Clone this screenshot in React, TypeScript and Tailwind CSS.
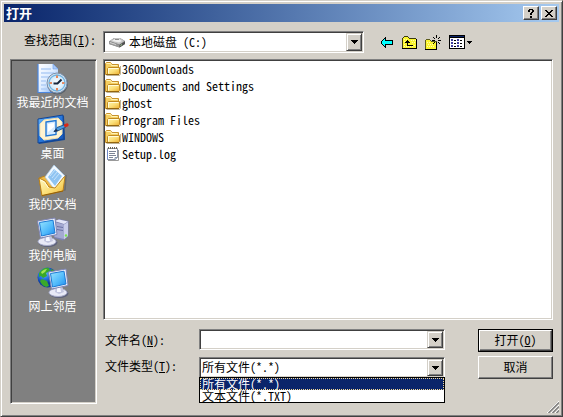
import React, { useState } from "react";

const sunken =
  "border border-t-[#808080] border-l-[#808080] border-r-white border-b-white shadow-[inset_1px_1px_0_#404040,inset_-1px_-1px_0_#d4d0c8]";
const raised =
  "border border-t-[#d4d0c8] border-l-[#d4d0c8] border-r-[#404040] border-b-[#404040] bg-[#d4d0c8] shadow-[inset_1px_1px_0_#fff,inset_-1px_-1px_0_#808080]";
const push =
  "border border-t-white border-l-white border-r-[#404040] border-b-[#404040] bg-[#d4d0c8] shadow-[inset_-1px_-1px_0_#808080]";

function DownTriangle() {
  return (
    <svg width="7" height="4" viewBox="0 0 7 4" shapeRendering="crispEdges" aria-hidden="true">
      <path d="M0 0h7v1H0zM1 1h5v1H1zM2 2h3v1H2zM3 3h1v1H3z" />
    </svg>
  );
}

function FolderIcon() {
  return (
    <svg width="16" height="16" viewBox="0 0 16 16" className="shrink-0" aria-hidden="true">
      <defs>
        <linearGradient id="folder" x1="0" y1="0" x2="1" y2="1">
          <stop offset="0" stopColor="#fff6b0" />
          <stop offset="0.5" stopColor="#fbe07a" />
          <stop offset="1" stopColor="#ecae30" />
        </linearGradient>
      </defs>
      <path d="M1.500 14.500h13l1-1.500V5" fill="none" stroke="#8a7440" opacity=".55" />
      <path d="M.5 13.500v-11l1-1h4l1.500 2h6.500v10z" fill="#f5cf62" stroke="#c8922c" />
      <path d="M1.500 2.500h4l1 2h6" fill="none" stroke="#fff4b8" />
      <path d="M2.500 13.500v-6l1-1h11v6l-1 1h-11z" fill="url(#folder)" stroke="#c08a22" />
      <path d="M3.500 12.500v-5h10" fill="none" stroke="#fffbd8" />
      <path d="M1 13.500h13" stroke="#94660f" />
    </svg>
  );
}

function NoteIcon() {
  return (
    <svg width="16" height="16" viewBox="0 0 16 16" className="shrink-0" aria-hidden="true">
      <path d="M3 14.500h10.500V4" fill="none" stroke="#9a9a9a" />
      <path d="M2.500 2.500h10v9l-2 2h-8z" fill="#fff" stroke="#8a94a8" />
      <path d="M4 5.500h7M4 7.500h6M4 9.500h7M4 11.500h4" stroke="#7b8496" />
      <path d="M2.500 4v9.500" stroke="#6f88c8" />
      <path d="M3 2.500h10" stroke="#c79a3c" strokeDasharray="1 1" />
      <path d="M3.500 1v2M5.500 1v2M7.500 1v2M9.500 1v2M11.500 1v2" stroke="#6d6450" />
      <path d="M10 13.500v-2h2.500" fill="#dfe6ef" stroke="#8192a8" />
    </svg>
  );
}

function DriveIcon() {
  return (
    <svg width="16" height="16" viewBox="0 0 16 16" className="shrink-0" aria-hidden="true">
      <path d="M0 7.500L5 4h6l5 3v3l-5.500 3.500L0 10z" fill="#7c7c7c" />
      <path d="M.5 7L5.500 4H11l4.500 3-5 3.500z" fill="#c4c4c4" />
      <path d="M3 7l3-2h4l3 2-3 1.500z" fill="#efefef" />
      <path d="M6 5.500h4" stroke="#8c8c8c" />
      <path d="M0 7.500L10.500 11v2.500L0 10z" fill="#989898" />
      <path d="M1 8.500l6 2" stroke="#d4d4d4" />
      <path d="M10.500 11L16 7.500V10l-5.500 3.500z" fill="#505050" />
      <path d="M11.500 11.500l1.500-1" stroke="#a8d898" />
    </svg>
  );
}

function RecentIcon() {
  return (
    <svg width="32" height="32" viewBox="0 0 32 32" aria-hidden="true">
      <defs>
        <linearGradient id="page" x1="0" y1="0" x2="1" y2="1">
          <stop offset="0" stopColor="#fff" />
          <stop offset=".5" stopColor="#dcebff" />
          <stop offset="1" stopColor="#6fa6f0" />
        </linearGradient>
        <radialGradient id="clock">
          <stop offset="0" stopColor="#fff" />
          <stop offset="1" stopColor="#cfe8fa" />
        </radialGradient>
      </defs>
      <path d="M1 1h15l5 5v24H1z" fill="url(#page)" />
      <path d="M1 1v28.500h20" fill="none" stroke="#4a86e0" strokeWidth="1.200" />
      <path d="M16 1v5h5z" fill="#a8c8f8" stroke="#6d9ee8" strokeWidth=".6" />
      <path d="M4 6h10M4 10h13M4 14h8M4 18h5M4 22h5M4 26h6" stroke="#b0cdf6" strokeWidth="1.500" />
      <circle cx="20.500" cy="21" r="10.500" fill="#4d5561" opacity=".7" />
      <circle cx="20" cy="20" r="10" fill="#d9e2ec" stroke="#7890ad" />
      <circle cx="20" cy="20" r="8" fill="url(#clock)" stroke="#6db4e4" strokeWidth="1.300" />
      <path d="M20 12.500v2.500M20 25v2.500M12.500 20H15M25 20h2.500" stroke="#ee6b2f" strokeWidth="1.600" />
      <path d="M16.500 20.500h4l4-4" fill="none" stroke="#16263c" strokeWidth="1.900" />
    </svg>
  );
}

function DesktopIcon() {
  return (
    <svg width="32" height="32" viewBox="0 0 32 32" aria-hidden="true">
      <defs>
        <linearGradient id="desk" x1="0" y1="0" x2="1" y2="1">
          <stop offset="0" stopColor="#6dbcff" />
          <stop offset=".4" stopColor="#2a7ee4" />
          <stop offset="1" stopColor="#1552b4" />
        </linearGradient>
      </defs>
      <path d="M2 6l25-4 1 24-26 4z" fill="#174c9a" />
      <path d="M1 5l25-4 1 24-26 4z" fill="url(#desk)" stroke="#124493" />
      <path d="M7 6l14-2 4 4v12l-4 4-14 2-4-4V10z" fill="#fff3d0" stroke="#efe0b0" />
      <path d="M9 8l10-1.500v14L9 22z" fill="#d3eaff" stroke="#2277d4" strokeWidth="1.400" />
      <path d="M11 10l6-1v4l-6 5z" fill="#fff" />
      <path d="M17 17.500l3-4L28 10.500l1 2.500-8.500 4z" fill="#4a9ae0" stroke="#204f87" strokeWidth=".9" />
      <path d="M16.500 18l3-3 1.500 2z" fill="#1a2a4c" />
      <path d="M28.500 11.500l1.500-.6" stroke="#d82818" strokeWidth="3.200" strokeLinecap="round" />
    </svg>
  );
}

function DocumentsIcon() {
  return (
    <svg width="32" height="32" viewBox="0 0 32 32" aria-hidden="true">
      <defs>
        <linearGradient id="docs" x1="0" y1="0" x2="1" y2="1">
          <stop offset="0" stopColor="#fffbc8" />
          <stop offset=".6" stopColor="#fbdc70" />
          <stop offset="1" stopColor="#eeae2c" />
        </linearGradient>
      </defs>
      <path d="M5 30L28 25l1-15" fill="none" stroke="#555" strokeWidth="1.500" opacity=".5" />
      <path d="M2 13l6-2 3 2 12-3 4 2-2 13-20 5z" fill="#efba48" stroke="#b88420" />
      <path d="M8 12L17 0l11 11-10 14z" fill="#f2f9ff" stroke="#a8cdec" strokeWidth=".7" />
      <path d="M11 12l6-8 8 7-7 10z" fill="#8fc4f2" />
      <path d="M13 11l5-6M15 13l5-6M17 15l5-6" stroke="#c6e3fb" />
      <path d="M2 13l6 3 4 6 6 1 9-11 1-.5-2 14.500L5 31z" fill="url(#docs)" stroke="#b77a12" strokeWidth=".9" />
      <path d="M3.500 15l4 2 4 6" fill="none" stroke="#fffde0" />
      <path d="M5 30.500L26 26" stroke="#92600b" />
    </svg>
  );
}

function Monitor({ x, y }: { x: number; y: number }) {
  return (
    <g transform={`translate(${x} ${y})`}>
      <ellipse cx="11" cy="25.500" rx="9.500" ry="4.500" fill="#555a78" opacity=".8" />
      <ellipse cx="10" cy="24.500" rx="9" ry="4" fill="#e8e9f6" stroke="#a7abc8" />
      <path d="M8 18h6l2 6-5 2-4-2z" fill="#c3c6e0" />
      <path d="M9 19h3l1 5H9z" fill="#f6f7ff" />
      <path d="M.5 4L18 1l2 16.500L3.500 21z" fill="#eef0fb" stroke="#7f86b4" />
      <path d="M2.500 5.500L16 3.200l2 12.800-13.500 3z" fill="url(#screen)" stroke="#1c7ad4" />
    </g>
  );
}

function ComputerIcon() {
  return (
    <svg width="32" height="32" viewBox="0 0 32 32" aria-hidden="true">
      <defs>
        <linearGradient id="screen" x1="0" y1="0" x2="1" y2="1">
          <stop offset="0" stopColor="#9be6ff" />
          <stop offset=".6" stopColor="#4db8fb" />
          <stop offset="1" stopColor="#2088ea" />
        </linearGradient>
      </defs>
      <path d="M17 5l5-2 9.500 2v15L26 24.500 17 22z" fill="#7c82b0" />
      <path d="M17.500 5l4.500-1.500L31 5.500 27 8z" fill="#e4e6f8" />
      <path d="M17.500 6L27 8.500V23l-9.500-2z" fill="#a5aad2" />
      <path d="M27 8.500l4-2.500v14l-4 3.500z" fill="#c9cdea" />
      <path d="M20 10.500l6 1M20 13.500l6 1" stroke="#6a71a4" />
      <circle cx="29" cy="19.500" r="1.200" fill="#75e844" />
      <Monitor x={0} y={1} />
    </svg>
  );
}

function NetworkIcon() {
  return (
    <svg width="32" height="32" viewBox="0 0 32 32" aria-hidden="true">
      <defs>
        <radialGradient id="globe" cx=".35" cy=".3">
          <stop offset="0" stopColor="#7cc4ff" />
          <stop offset=".5" stopColor="#2a7ce8" />
          <stop offset="1" stopColor="#0c3ca0" />
        </radialGradient>
      </defs>
      <circle cx="10.500" cy="10.500" r="10" fill="url(#globe)" />
      <path d="M2 6c3-5 7-6 10-5l1 3-4 2 1 3-4 2-2-2-2 1zM14 2c3 1 5 3 6 6l-4 3-3-3zM5 12l5 2 2 5-3 1c-3-1-5-3-6-6z" fill="#3aa82a" />
      <path d="M4 5c2-2 4-3 6-3L8 5 5 7z" fill="#a6e652" />
      <Monitor x={11} y={1} />
    </svg>
  );
}

function BackIcon() {
  return (
    <svg width="12" height="11" viewBox="0 0 12 11" shapeRendering="crispEdges" aria-hidden="true">
      <path d="M4 0h1v3h7v5H5v3H4v-1H3V9H2V8H1V7H0V4h1V3h1V2h1V1h1z" />
      <path d="M4 2v2h7v3H4v2H3V8H2V7H1V4h1V3h1V2z" fill="#00ffff" />
    </svg>
  );
}

function UpIcon() {
  return (
    <svg width="15" height="13" viewBox="0 0 15 13" shapeRendering="crispEdges" aria-hidden="true">
      <path d="M2 0h4v1h1v1h7v1h1v10H0V2h1V1h1z" fill="#3c3c10" />
      <path d="M2 1h4v1h1v1h7v9H1V2h1z" fill="#fbf62e" />
      <path d="M2 3h1M4 3h1M9 4h1M11 4h1M13 4h1M2 5h1M10 6h1M12 6h1M2 8h1M12 9h1M2 10h1M4 10h1M6 10h1M8 10h1M10 10h1" stroke="#fffcb0" />
      <path d="M0 12h15v1H0zM14 3h1v10h-1z" />
      <path d="M5 4h1v1h1v1h1v1H6v2h5v1H5V7H3V6h1V5h1z" />
    </svg>
  );
}

function NewFolderIcon() {
  return (
    <svg width="16" height="15" viewBox="0 0 16 15" shapeRendering="crispEdges" aria-hidden="true">
      <path d="M1 4h4v1h1v1h6v9H0V5h1z" fill="#5c5c1c" />
      <path d="M1 5h4v1h1v1h5v7H1z" fill="#fbf62e" />
      <path d="M2 7.500h1M4 7.500h1M3 9.500h1M5 9.500h1M7 9.500h1M2 11.500h1M4 11.500h1M6 11.500h1M8 11.500h1" stroke="#fffcb0" />
      <path d="M0 14h12v1H0zM11 8h1v7h-1z" />
      <path d="M11 0h1v3h-1zM11 7h1v3h-1zM7 5h3v1H7zM13 5h3v1h-3zM8 2h1v1H8zM9 3h1v1H9zM14 2h1v1h-1zM13 3h1v1h-1zM9 7h1v1H9zM8 8h1v1H8zM13 7h1v1h-1zM14 8h1v1h-1z" />
    </svg>
  );
}

function ViewIcon() {
  return (
    <svg width="16" height="14" viewBox="0 0 16 14" shapeRendering="crispEdges" aria-hidden="true">
      <path d="M0 0h16v14H0z" />
      <path d="M1 3h14v10H1z" fill="#fff" />
      <path d="M1 1h14v1H1z" fill="#0a246a" />
      <path d="M2 4h2v2H2zM2 7h2v2H2zM2 10h2v2H2zM8 4h2v2H8zM8 7h2v2H8zM8 10h2v2H8z" fill="#3c3c9c" />
      <path d="M5 5h2v1H5zM5 8h2v1H5zM5 11h2v1H5zM11 5h2v1h-2zM11 8h2v1h-2zM11 11h2v1h-2z" />
    </svg>
  );
}

const places = [
  { name: "我最近的文档", Icon: RecentIcon },
  { name: "桌面", Icon: DesktopIcon },
  { name: "我的文档", Icon: DocumentsIcon },
  { name: "我的电脑", Icon: ComputerIcon },
  { name: "网上邻居", Icon: NetworkIcon },
];

const files = [
  { name: "360Downloads", Icon: FolderIcon },
  { name: "Documents and Settings", Icon: FolderIcon },
  { name: "ghost", Icon: FolderIcon },
  { name: "Program Files", Icon: FolderIcon },
  { name: "WINDOWS", Icon: FolderIcon },
  { name: "Setup.log", Icon: NoteIcon },
];

const types = ["所有文件(*.*)", "文本文件(*.TXT)"];

function ComboArrow() {
  return (
    <span className={`pointer-events-none flex w-4 shrink-0 items-center justify-center ${raised}`}>
      <DownTriangle />
    </span>
  );
}

export default function App() {
  const [type, setType] = useState(types[0]);
  const [fileName, setFileName] = useState("");

  return (
    <div className="flex min-h-screen w-full flex-col border border-t-[#d4d0c8] border-l-[#d4d0c8] border-r-[#404040] border-b-[#404040] bg-[#d4d0c8] p-[3px] font-['Noto_Sans_CJK_SC',sans-serif] text-[12px] leading-[14px] text-black shadow-[inset_1px_1px_0_#fff,inset_-1px_-1px_0_#808080] [font-feature-settings:'hwid']">
      <header className="flex h-[18px] items-center gap-0.5 bg-linear-to-r from-[#0a246a] to-[#a6caf0] px-0.5">
        <h1 className="flex-1 text-[13px] font-bold text-white">打开</h1>
        <button aria-label="帮助" className={`flex h-3.5 w-4 items-center justify-center ${push}`}>
          <svg width="6" height="9" viewBox="0 0 6 9" shapeRendering="crispEdges" aria-hidden="true">
            <path d="M1 0h4v1H1zM0 1h2v2H0zM4 1h2v2H4zM3 3h2v1H3zM2 4h2v2H2zM2 7h2v2H2z" />
          </svg>
        </button>
        <button aria-label="关闭" className={`flex h-3.5 w-4 items-center justify-center ${push}`}>
          <svg width="8" height="7" viewBox="0 0 8 7" shapeRendering="crispEdges" aria-hidden="true">
            <path d="M0 0h2v1H0zM6 0h2v1H6zM1 1h2v1H1zM5 1h2v1H5zM2 2h4v1H2zM3 3h2v1H3zM2 4h4v1H2zM1 5h2v1H1zM5 5h2v1H5zM0 6h2v1H0zM6 6h2v1H6z" />
          </svg>
        </button>
      </header>

      <div className="flex items-center pt-[9px] pr-1.5 pb-1.5 pl-5">
        <label htmlFor="look-in" className="w-[79px] pb-1">
          查找范围(<u>I</u>):
        </label>
        <div className={`flex h-[22px] flex-1 bg-white p-px ${sunken}`}>
          <div className="relative flex flex-1 items-center">
            <span className="absolute left-1">
              <DriveIcon />
            </span>
            <select id="look-in" className="h-full w-full appearance-none pb-px pl-6 outline-none">
              <option>本地磁盘 (C:)</option>
            </select>
          </div>
          <ComboArrow />
        </div>
        <div className="ml-[17px] flex w-[172px] items-center gap-2">
          <button aria-label="后退" className="w-[13px]">
            <BackIcon />
          </button>
          <button aria-label="向上一级">
            <UpIcon />
          </button>
          <button aria-label="新建文件夹">
            <NewFolderIcon />
          </button>
          <button aria-label="查看菜单" className="flex items-center gap-0.5">
            <ViewIcon />
            <svg width="5" height="3" viewBox="0 0 5 3" shapeRendering="crispEdges" aria-hidden="true">
              <path d="M0 0h5v1H0zM1 1h3v1H1zM2 2h1v1H2z" />
            </svg>
          </button>
        </div>
      </div>

      <div className="relative flex flex-1 gap-1.5 px-1.5 pb-[9px]">
        <nav className={`flex w-[87px] flex-col gap-[5px] bg-[#808080] pt-[3px] pr-0.5 ${sunken}`}>
          {places.map(({ name, Icon }) => (
            <button key={name} className="flex flex-col items-center whitespace-nowrap text-white">
              <Icon />
              {name}
            </button>
          ))}
        </nav>

        <main className="flex min-w-0 flex-1 flex-col">
          <ul className={`flex-1 bg-white pl-px ${sunken}`}>
            {files.map(({ name, Icon }) => (
              <li key={name} className="flex h-[17px] items-center gap-px">
                <Icon />
                {name}
              </li>
            ))}
          </ul>

          <form className="flex gap-[33px] pt-[9px] pb-[25px]" onSubmit={(e) => e.preventDefault()}>
            <div className="flex flex-1 flex-col gap-[7px]">
              <div className="flex items-center pl-0.5">
                <label htmlFor="file-name" className="w-[94px]">
                  文件名(<u>N</u>):
                </label>
                <div className={`flex h-[21px] flex-1 bg-white p-px ${sunken}`}>
                  <input
                    id="file-name"
                    value={fileName}
                    onChange={(e) => setFileName(e.target.value)}
                    className="w-0 flex-1 px-0.5 outline-none"
                  />
                  <ComboArrow />
                </div>
              </div>
              <div className="flex items-center pl-0.5">
                <label htmlFor="file-type" className="w-[94px] pb-1">
                  文件类型(<u>T</u>):
                </label>
                <div className={`relative flex h-[21px] flex-1 bg-white p-px ${sunken}`}>
                  <select
                    id="file-type"
                    value={type}
                    onChange={(e) => setType(e.target.value)}
                    className="flex-1 appearance-none pb-0.5 pl-px outline-none"
                  >
                    {types.map((t) => (
                      <option key={t}>{t}</option>
                    ))}
                  </select>
                  <ComboArrow />
                  <ul
                    role="listbox"
                    aria-label="文件类型"
                    className="absolute top-[19px] -right-px -left-px border border-black bg-white leading-[12px]"
                  >
                    {types.map((t) => (
                      <li
                        key={t}
                        role="option"
                        aria-selected={t === type}
                        onClick={() => setType(t)}
                        className="h-3 pl-0.5 aria-selected:bg-[#0a246a] aria-selected:text-white aria-selected:outline-1 aria-selected:-outline-offset-1 aria-selected:outline-dotted aria-selected:outline-[#f5db95]"
                      >
                        {t}
                      </li>
                    ))}
                  </ul>
                </div>
              </div>
            </div>
            <div className="flex w-[75px] flex-col gap-1">
              <div className="flex h-[23px] border border-black">
                <button type="submit" className={`flex-1 pb-0.5 ${push}`}>
                  打开(<u>O</u>)
                </button>
              </div>
              <button type="button" className={`h-[23px] pb-0.5 ${push}`}>
                取消
              </button>
            </div>
          </form>
        </main>

        <svg
          width="12"
          height="12"
          viewBox="0 0 12 12"
          className="absolute right-0 bottom-0"
          aria-hidden="true"
        >
          <path d="M0 12L12 0M4 12l8-8M8 12l4-4" stroke="#fff" />
          <path d="M1.500 12L12 1.500M5.500 12L12 5.500M9.500 12L12 9.500" stroke="#808080" strokeWidth="1.500" />
        </svg>
      </div>
    </div>
  );
}
